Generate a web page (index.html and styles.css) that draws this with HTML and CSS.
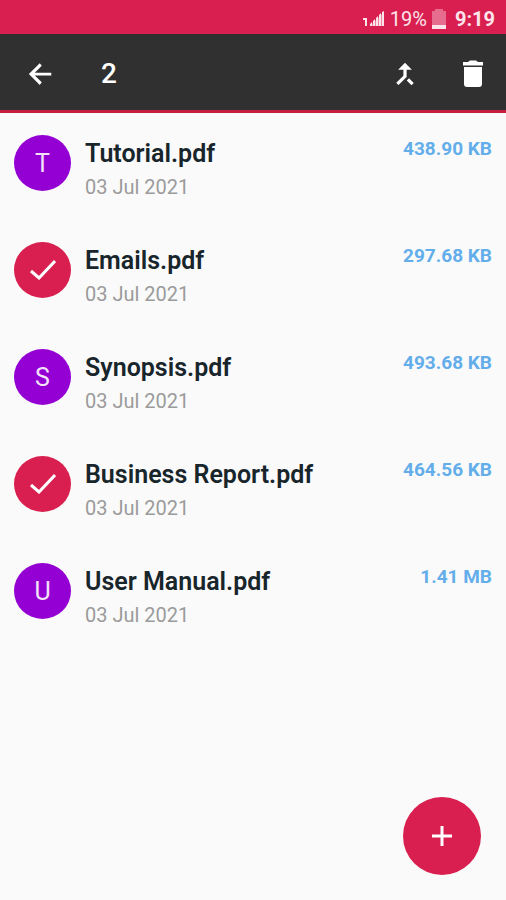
FILE: index.html
```html
<!DOCTYPE html>
<html lang="en">
<head>
<meta charset="utf-8">
<meta name="viewport" content="width=device-width, initial-scale=1">
<title>PDF files</title>
<link rel="stylesheet" href="styles.css">
</head>
<body>
<div class="status">
  <svg class="signal" viewBox="0 0 22 16" aria-hidden="true"><path d="M0 7h4v8H2V9H0z"/><path d="M7 15v-2l2-2v4zM10 15v-5l2-2v7zM13 15V7l2-2v10zM16 15V4l2-2v13zM19 15V1l2-1v15z"/><path opacity=".5" d="M7 15L21 1v14z"/></svg>
  <span class="percent">19%</span>
  <svg class="battery" viewBox="0 0 14 20" aria-hidden="true"><path opacity=".4" d="M3 0h8v2h3v14H0V2h3z"/><path d="M0 16h14v4H0z"/></svg>
  <span class="clock">9:19</span>
</div>
<header class="toolbar">
  <button class="tool" type="button" aria-label="Back"><svg class="icon" viewBox="0 0 24 24"><path d="M21 10.900H7.830l5.590-5.490L11.800 3.300l-8.700 8.700 8.700 8.700 1.620-2.110-5.590-5.490H21z"/></svg></button>
  <h1 class="count">2</h1>
  <button class="tool" type="button" aria-label="Merge"><svg class="icon" viewBox="0 0 24 24"><path d="M17.200 21 19 19.200 15.200 15.400 13.400 17.200zM6.500 8.500H10.700v4.800L5 19l1.800 1.800 6.500-6.500V8.500h4.200L12 3z"/></svg></button>
  <button class="tool" type="button" aria-label="Delete"><svg class="icon trash" viewBox="0 0 24 28"><path d="M3 7h18v17a3 3 0 0 1-3 3H6a3 3 0 0 1-3-3zM7 2l2-1.500h6L17 2h5v3.500H2V2z"/></svg></button>
</header>
<main>
  <ul class="files">
    <li class="file"><span class="avatar">T</span><div class="info"><h2 class="name">Tutorial.pdf</h2><p class="date">03 Jul 2021</p></div><span class="size">438.90 KB</span></li>
    <li class="file"><span class="avatar selected"><svg class="check" viewBox="0 0 26 20" role="img" aria-label="Selected"><path d="M1 11l8 7L25 1"/></svg></span><div class="info"><h2 class="name">Emails.pdf</h2><p class="date">03 Jul 2021</p></div><span class="size">297.68 KB</span></li>
    <li class="file"><span class="avatar">S</span><div class="info"><h2 class="name">Synopsis.pdf</h2><p class="date">03 Jul 2021</p></div><span class="size">493.68 KB</span></li>
    <li class="file"><span class="avatar selected"><svg class="check" viewBox="0 0 26 20" role="img" aria-label="Selected"><path d="M1 11l8 7L25 1"/></svg></span><div class="info"><h2 class="name">Business Report.pdf</h2><p class="date">03 Jul 2021</p></div><span class="size">464.56 KB</span></li>
    <li class="file"><span class="avatar">U</span><div class="info"><h2 class="name">User Manual.pdf</h2><p class="date">03 Jul 2021</p></div><span class="size">1.41 MB</span></li>
  </ul>
</main>
<button class="fab" type="button" aria-label="Add file"><svg class="plus" viewBox="0 0 22 22"><path d="M11 1v20M1 11h20"/></svg></button>
</body>
</html>
```
FILE: styles.css
```css
* { box-sizing: border-box; }
body {
  margin: 0;
  background: #fafafa;
  font-family: Roboto, "Liberation Sans", sans-serif;
}
h1, h2, p, ul { margin: 0; padding: 0; }
button { border: 0; padding: 0; color: #fff; cursor: pointer; }
svg { display: block; fill: currentColor; }

.status {
  display: flex;
  align-items: center;
  justify-content: flex-end;
  gap: 5px;
  height: 34px;
  padding: 4px 11px 0;
  background: #d81f50;
  color: #fde4ea;
  font-size: 20px;
}
.signal { width: 22px; height: 16px; }
.battery { width: 14px; height: 20px; }
.clock { margin-left: 4px; font-weight: 700; }

.toolbar {
  display: flex;
  align-items: center;
  height: 79px;
  padding: 3px 5px 0 12px;
  border-bottom: 3px solid #c41f3f;
  background: #303030;
  color: #fff;
}
.tool {
  display: grid;
  place-items: center;
  width: 56px;
  height: 56px;
  background: none;
}
.tool + .tool { margin-left: 12px; }
.icon { width: 30px; height: 30px; }
.trash { width: 24px; height: 28px; }
.count {
  flex: 1;
  padding-left: 33px;
  font-size: 28px;
  font-weight: 500;
}

.files { padding: 22px 14px 0; list-style: none; }
.file {
  display: flex;
  align-items: flex-start;
  height: 107px;
}
.avatar {
  display: grid;
  flex: none;
  place-items: center;
  width: 57px;
  height: 56px;
  margin-right: 14px;
  border-radius: 50%;
  background: #9400d3;
  color: #f3e2fa;
  font-size: 25px;
}
.selected { background: #d81f50; color: #fff; }
.check {
  width: 26px;
  height: 20px;
  fill: none;
  stroke: currentColor;
  stroke-width: 3;
}
.info { flex: 1; min-width: 0; }
.name {
  color: #18252b;
  font-size: 25px;
  font-weight: 600;
  line-height: 37px;
}
.date { color: #9b9b9b; font-size: 20px; line-height: 31px; }
.size {
  color: #63aeea;
  font-size: 19px;
  font-weight: 700;
  line-height: 28px;
}

.fab {
  position: fixed;
  right: 25px;
  bottom: 25px;
  display: grid;
  place-items: center;
  width: 78px;
  height: 78px;
  border-radius: 50%;
  background: #d81f50;
}
.plus { width: 22px; height: 22px; stroke: currentColor; stroke-width: 3; }
```
